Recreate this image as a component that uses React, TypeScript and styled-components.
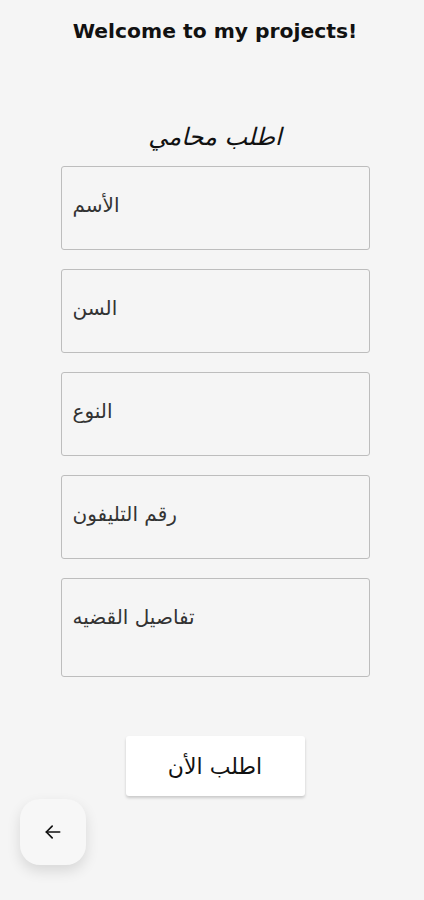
import React from "react";
import styled, {createGlobalStyle} from "styled-components";

const GlobalStyle = createGlobalStyle`
  html, body {
    margin: 0;
    padding: 0;
    background: #f5f5f5;
  }
  * {
    box-sizing: border-box;
  }
`

const fields = [
    {label: "الأسم", tall: false},
    {label: "السن", tall: false},
    {label: "النوع", tall: false},
    {label: "رقم التليفون", tall: false},
    {label: "تفاصيل القضيه", tall: true},
]

export default function App() {
    return <Page>
        <GlobalStyle/>
        <Title>Welcome to my projects!</Title>
        <FormTitle>اطلب محامي</FormTitle>
        <Form>
            {fields.map((item, index) =>
                <Field key={index} placeholder={item.label} isTall={item.tall}/>
            )}
        </Form>
        <SubmitButton>اطلب الأن</SubmitButton>
        <BackButton aria-label="back">
            <svg width="20" height="20" viewBox="0 0 24 24" fill="none" stroke="#111"
                 strokeWidth="2" strokeLinecap="round" strokeLinejoin="round">
                <path d="M20 12H4"/>
                <path d="M11 5l-7 7 7 7"/>
            </svg>
        </BackButton>
    </Page>
}

const Page = styled.div`
  min-height: 900px;
  display: flex;
  flex-direction: column;
  align-items: center;
  padding: 19px 0 0 6px;
  background: #f5f5f5;
`

const Title = styled.h1`
  margin: 0;
  font-family: "DejaVu Sans", "Noto Sans", sans-serif;
  font-weight: 700;
  font-size: 20.3px;
  line-height: 24px;
  color: #111;
`

const FormTitle = styled.h2`
  margin: 77px 0 0;
  font-family: "DejaVu Sans", sans-serif;
  font-style: italic;
  font-weight: 400;
  font-size: 24px;
  line-height: 34px;
  color: #111;
`

const Form = styled.div`
  margin-top: 12px;
  display: flex;
  flex-direction: column;
  gap: 19px;
`

const Field = styled.textarea<{ isTall: boolean }>`
  display: block;
  width: 309px;
  height: ${props => props.isTall ? "99px" : "84px"};
  padding: 23px 11px 0;
  resize: none;
  background: #f5f5f5;
  border: 1px solid #bdbdbd;
  border-radius: 3px;
  font-family: "DejaVu Sans", sans-serif;
  font-size: 20px;
  line-height: 30px;
  color: #333;
  direction: ltr;
  text-align: left;
  outline: none;

  &::placeholder {
    color: #333;
  }
`

const SubmitButton = styled.button`
  margin-top: 59px;
  width: 179px;
  height: 60px;
  border: none;
  border-radius: 3px;
  background: #fff;
  box-shadow: 0 2px 3px rgba(0, 0, 0, 0.18);
  font-family: "DejaVu Sans", sans-serif;
  font-size: 22px;
  color: #111;
  cursor: pointer;
`

const BackButton = styled.button`
  align-self: flex-start;
  margin: 3px 0 0 14px;
  width: 66px;
  height: 66px;
  border: none;
  border-radius: 20px;
  background: #f7f7f7;
  box-shadow: 0 6px 14px rgba(0, 0, 0, 0.12);
  display: flex;
  align-items: center;
  justify-content: center;
  cursor: pointer;
`
